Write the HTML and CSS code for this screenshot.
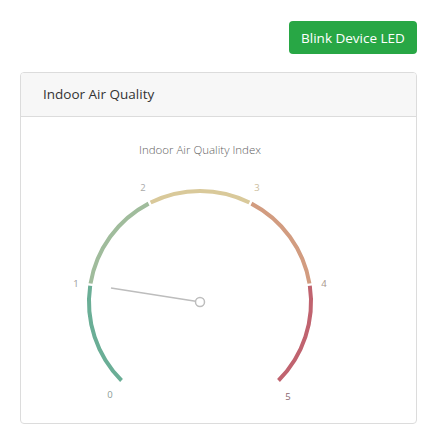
FILE: index.html
```html
<!DOCTYPE html>
<html>
<head>
<meta charset="utf-8">
<link rel="stylesheet" href="styles.css">
</head>
<body>
<div class="page">
  <div class="toolbar">
    <button class="btn-success">Blink Device LED</button>
  </div>
  <div class="card">
    <div class="card-header">Indoor Air Quality</div>
    <div class="card-body">
      <svg class="gauge" width="394" height="306" viewBox="21 116 394 306">
        <text class="gauge-title" x="200" y="153" text-anchor="middle">Indoor Air Quality Index</text>
        <g class="arcs" fill="none" stroke-width="4">
          <path d="M 121.51 379.49 A 111 111 0 0 1 90.19 284.79" stroke="#6aae96"/>
          <path d="M 90.55 282.49 A 111 111 0 0 1 148.57 202.63" stroke="#a0bc9c"/>
          <path d="M 150.64 201.58 A 111 111 0 0 1 249.36 201.58" stroke="#d9c99a"/>
          <path d="M 251.43 202.63 A 111 111 0 0 1 309.45 282.49" stroke="#d29c80"/>
          <path d="M 309.81 284.79 A 111 111 0 0 1 278.49 379.49" stroke="#c0636f"/>
        </g>
        <g class="labels" text-anchor="middle">
          <text x="110" y="397" fill="#8c9c97">0</text>
          <text x="76" y="286" fill="#9a9a9a">1</text>
          <text x="143" y="190" fill="#a9a9a9">2</text>
          <text x="257" y="190" fill="#cbbd9d">3</text>
          <text x="324" y="286" fill="#a8968b">4</text>
          <text x="288" y="399" fill="#8a6870">5</text>
        </g>
        <line x1="111" y1="287" x2="195.6" y2="300.3" stroke="#bdbdbd" stroke-width="1.5"/>
        <circle cx="200" cy="301" r="4.5" fill="#fff" stroke="#bdbdbd" stroke-width="1.5"/>
      </svg>
    </div>
  </div>
</div>
</body>
</html>
```

FILE: styles.css
```css
html, body {
  margin: 0;
  padding: 0;
  background: #ffffff;
}
body {
  font-family: "Open Sans", "Noto Sans", sans-serif;
  color: #333;
}
.page {
  padding: 21px 14px 0 20px;
}
.toolbar {
  display: flex;
  justify-content: flex-end;
  margin-right: -1px;
  margin-bottom: 18px;
}
.btn-success {
  background: #28a745;
  color: #fff;
  border: none;
  border-radius: 4px;
  height: 33px;
  width: 128px;
  font-family: "Open Sans", "Noto Sans", sans-serif;
  font-size: 13.5px;
  padding: 0;
  cursor: pointer;
}
.card {
  border: 1px solid #dcdcdc;
  border-radius: 4px;
  width: 395px;
  overflow: hidden;
}
.card-header {
  background: #f7f7f7;
  border-bottom: 1px solid #dcdcdc;
  height: 43px;
  line-height: 43px;
  padding-left: 22px;
  font-size: 13.5px;
  color: #333;
}
.card-body {
  display: flex;
  height: 306px;
}
.gauge {
  display: block;
}
.gauge-title {
  font-family: "Open Sans", sans-serif;
  font-size: 11.5px;
  font-weight: 300;
  fill: #5f5f5f;
}
.labels text {
  font-family: "Open Sans", sans-serif;
  font-size: 9.5px;
}
```
